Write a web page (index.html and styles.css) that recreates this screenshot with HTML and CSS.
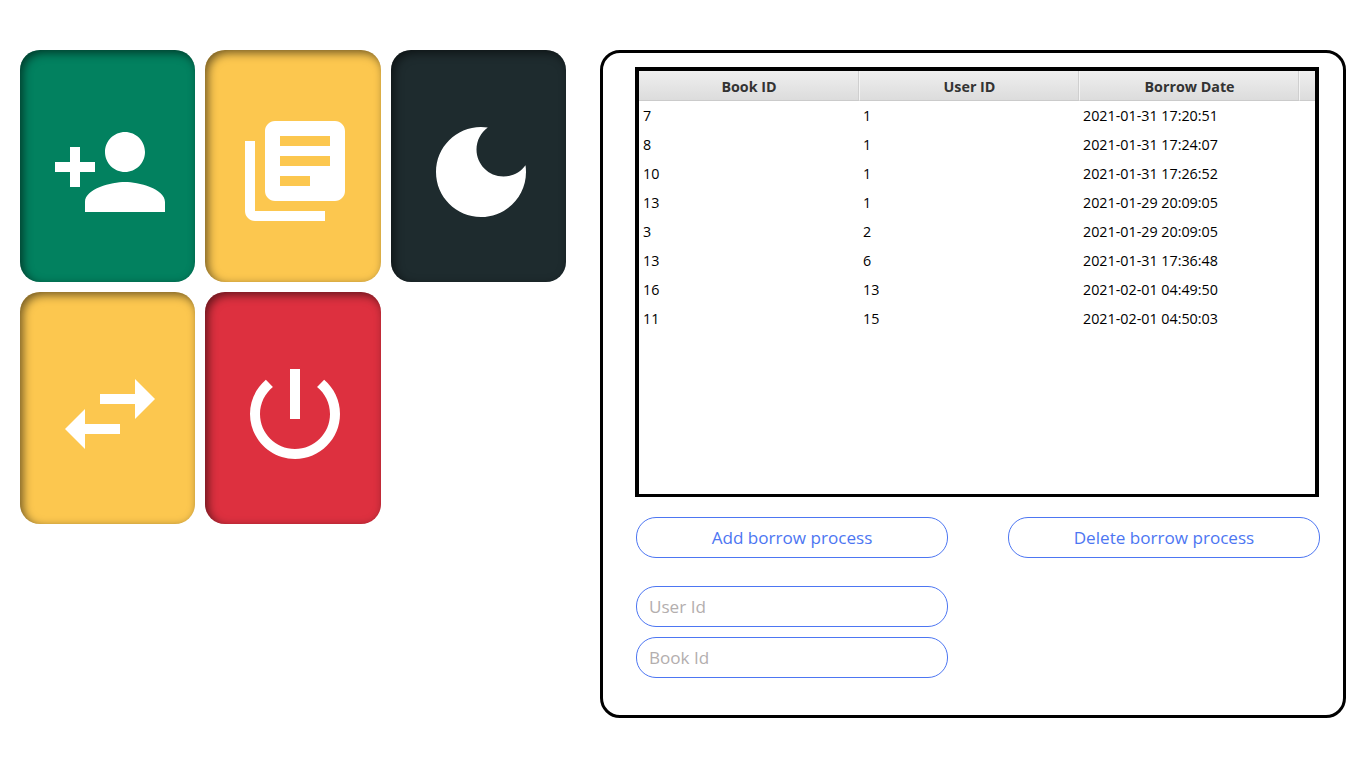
FILE: index.html
```html
<!DOCTYPE html>
<html lang="en">
<head>
<meta charset="utf-8">
<title>Borrow processes</title>
<link rel="stylesheet" href="styles.css">
</head>
<body>
<main class="page">
  <nav class="tiles">
    <button class="tile tile-green" type="button" aria-label="Add user">
      <svg class="tile-icon" viewBox="0 0 24 24"><path d="M15 12c2.21 0 4-1.79 4-4s-1.79-4-4-4-4 1.79-4 4 1.79 4 4 4zm-9-2V7H4v3H1v2h3v3h2v-3h3v-2H6zm9 4c-2.67 0-8 1.34-8 4v2h16v-2c0-2.66-5.33-4-8-4z"/></svg>
    </button>
    <button class="tile tile-yellow" type="button" aria-label="Books">
      <svg class="tile-icon tile-icon-books" viewBox="0 0 24 24"><path d="M4 6H2v14c0 1.1.9 2 2 2h14v-2H4V6zm16-4H8c-1.1 0-2 .9-2 2v12c0 1.1.9 2 2 2h12c1.1 0 2-.9 2-2V4c0-1.1-.9-2-2-2zm-1 9H9V9h10v2zm-4 4H9v-2h6v2zm4-8H9V5h10v2z"/></svg>
    </button>
    <button class="tile tile-dark" type="button" aria-label="Dark mode">
      <svg class="tile-icon" viewBox="0 0 24 24"><path d="M12 3c-4.97 0-9 4.03-9 9s4.03 9 9 9 9-4.03 9-9c0-.46-.04-.92-.1-1.36-.98 1.37-2.58 2.26-4.4 2.26-2.98 0-5.4-2.42-5.4-5.4 0-1.81.89-3.42 2.26-4.4-.44-.06-.9-.1-1.36-.1z"/></svg>
    </button>
    <button class="tile tile-yellow" type="button" aria-label="Borrow">
      <svg class="tile-icon" viewBox="0 0 24 24"><path d="M10 8h7V5l4 4-4 4v-3h-7V8zM14 14H7v-3l-4 4 4 4v-3h7v-2z"/></svg>
    </button>
    <button class="tile tile-red" type="button" aria-label="Power off">
      <svg class="tile-icon" viewBox="0 0 24 24"><path d="M13 3h-2v10h2V3zm4.83 2.17l-1.42 1.42C17.99 7.86 19 9.81 19 12c0 3.87-3.13 7-7 7s-7-3.13-7-7c0-2.19 1.01-4.14 2.58-5.42L6.17 5.17C4.23 6.82 3 9.26 3 12c0 4.97 4.03 9 9 9s9-4.03 9-9c0-2.74-1.23-5.18-3.17-6.83z"/></svg>
    </button>
  </nav>

  <section class="panel">
    <div class="table-frame">
      <table class="data">
        <colgroup><col class="col-a"><col class="col-b"><col class="col-c"><col class="col-d"></colgroup>
        <thead>
          <tr><th>Book ID</th><th>User ID</th><th>Borrow Date</th><th class="filler"></th></tr>
        </thead>
        <tbody>
          <tr><td>7</td><td>1</td><td>2021-01-31 17:20:51</td><td></td></tr>
          <tr><td>8</td><td>1</td><td>2021-01-31 17:24:07</td><td></td></tr>
          <tr><td>10</td><td>1</td><td>2021-01-31 17:26:52</td><td></td></tr>
          <tr><td>13</td><td>1</td><td>2021-01-29 20:09:05</td><td></td></tr>
          <tr><td>3</td><td>2</td><td>2021-01-29 20:09:05</td><td></td></tr>
          <tr><td>13</td><td>6</td><td>2021-01-31 17:36:48</td><td></td></tr>
          <tr><td>16</td><td>13</td><td>2021-02-01 04:49:50</td><td></td></tr>
          <tr><td>11</td><td>15</td><td>2021-02-01 04:50:03</td><td></td></tr>
        </tbody>
      </table>
    </div>

    <div class="actions">
      <button class="pill pill-button" type="button">Add borrow process</button>
      <button class="pill pill-button" type="button">Delete borrow process</button>
    </div>

    <form class="fields">
      <input class="pill pill-input" type="text" placeholder="User Id">
      <input class="pill pill-input" type="text" placeholder="Book Id">
    </form>
  </section>
</main>
</body>
</html>
```

FILE: styles.css
```css
* { box-sizing: border-box; }

html, body {
  margin: 0;
  height: 100%;
  background: #fff;
}

body {
  font-family: "Open Sans", "Noto Sans", sans-serif;
  overflow: hidden;
}

.page {
  display: flex;
  align-items: flex-start;
  gap: 34px;
  padding: 50px 20px 0;
}

.tiles {
  display: grid;
  grid-template-columns: repeat(3, 175.33px);
  grid-auto-rows: 232px;
  gap: 10px;
  width: 546px;
  flex: none;
}

.tile {
  display: flex;
  align-items: center;
  justify-content: center;
  margin: 0;
  padding: 11px 0 0 5px;
  border: 0;
  border-radius: 20px;
  box-shadow: inset 3px 3px 10px rgba(0, 0, 0, 0.55);
}

.tile-green { background: #02815f; }
.tile-yellow { background: #fcc74f; }
.tile-dark { background: #1e2b2e; }
.tile-red { background: #dd303f; }

.tile-icon {
  width: 120px;
  height: 120px;
  flex: none;
  fill: #fff;
}

.tile-icon-books { margin-top: -2px; }

.panel {
  width: 746px;
  height: 668px;
  flex: none;
  padding: 14px 24px 0 32px;
  border: 3px solid #000;
  border-radius: 20px;
}

.table-frame {
  width: 684px;
  height: 430px;
  border: 4px solid #000;
  border-bottom-width: 3px;
  overflow: hidden;
}

.data {
  width: 676px;
  border-collapse: separate;
  border-spacing: 0;
  table-layout: fixed;
  font-size: 14.3px;
  color: #000;
}

.col-a { width: 221px; }
.col-b, .col-c { width: 220px; }
.col-d { width: 15px; }

.data th {
  height: 30px;
  padding: 1px 0 0;
  font-weight: 700;
  font-size: 14.3px;
  color: #333;
  background: linear-gradient(#efefef, #dcdcdc);
  border-bottom: 1px solid #cbcbcb;
  border-right: 1px solid #f4f4f4;
  box-shadow: inset -1px 0 #cfcfcf;
}

.data th.filler {
  border-right: 0;
  box-shadow: none;
}

.data td {
  height: 29px;
  padding: 0 0 0 3px;
  white-space: nowrap;
}

.data td:first-child { padding-left: 4px; }

.actions {
  display: flex;
  justify-content: space-between;
  margin: 20px 0 0 1px;
  width: 684px;
}

.fields {
  display: flex;
  flex-direction: column;
  gap: 10px;
  margin: 28px 0 0 1px;
}

.pill {
  display: block;
  width: 312px;
  height: 41px;
  margin: 0;
  border: 1px solid #4d76f2;
  border-radius: 20px;
  background: #fff;
  font-family: "Open Sans", "Noto Sans", sans-serif;
  font-weight: 400;
  font-size: 17.1px;
  outline: none;
}

.pill-button {
  padding: 0;
  color: #4d76f2;
}

.pill-input {
  padding: 0 12px;
  color: #333;
}

.pill-input::placeholder {
  color: #b3aeae;
  opacity: 1;
}
```
